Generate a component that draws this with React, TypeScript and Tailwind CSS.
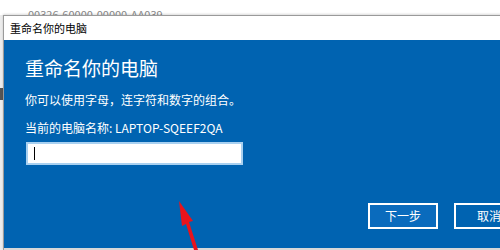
import React from 'react';

const font = { fontFamily: '"Microsoft YaHei", "Noto Sans CJK SC", "Noto Sans", sans-serif' };

export default function App() {
  return (
    <div className="relative w-[500px] h-[250px] overflow-hidden bg-white" style={font}>
      {/* window behind the dialog */}
      <div className="h-[15px] overflow-hidden bg-white">
        <div className="pl-[28px] pt-[8px] text-[11px] leading-[12px] text-[#888]">00326-60000-00000-AA039</div>
      </div>
      <div className="flex h-[235px]">
        <div className="w-[3px] bg-[#ececec] flex flex-col">
          <div className="mt-[73px] h-[12px] w-[3px] bg-[#555]" />
        </div>
        <div className="flex-1 flex flex-col border-l border-t border-[#9a9a9a] shadow-[0_-1px_2px_rgba(0,0,0,0.15)]">
          <div className="h-[24px] bg-white flex items-center pl-[6px] text-[11px] text-black">重命名你的电脑</div>
          <div className="flex-1 bg-[#0063b1] pl-[21px] text-white">
            <div className="mt-[15px] text-[19px] leading-[26px]">重命名你的电脑</div>
            <div className="mt-[11px] text-[12px] leading-[16px]">你可以使用字母，连字符和数字的组合。</div>
            <div className="mt-[12px] text-[12px] leading-[16px]">当前的电脑名称: LAPTOP-SQEEF2QA</div>
            <div className="mt-[6px] ml-[1px] w-[217px] h-[23px] bg-white border-2 border-[#a8d0f0] flex items-center pl-[6px]">
              <div className="w-[1px] h-[13px] bg-black" />
            </div>
            <div className="mt-[38px] ml-[343px] flex gap-[16px]">
              <div className="w-[70px] h-[26px] border-2 border-white bg-[#0a6bbd] flex items-center justify-center text-[12px]">下一步</div>
              <div className="w-[70px] h-[26px] border-2 border-white bg-[#0063b1] flex items-center justify-center text-[12px] shrink-0">取消</div>
            </div>
          </div>
          <div className="h-[2px] bg-[#d8d8d8]" />
        </div>
      </div>
      <svg className="absolute left-[170px] top-[195px]" width="40" height="55" viewBox="0 0 40 55">
        <path d="M9 6 L23 26 L19 27 L28 55 L24 55 L16 29 L12 31 Z" fill="#e8141c" />
      </svg>
    </div>
  );
}
